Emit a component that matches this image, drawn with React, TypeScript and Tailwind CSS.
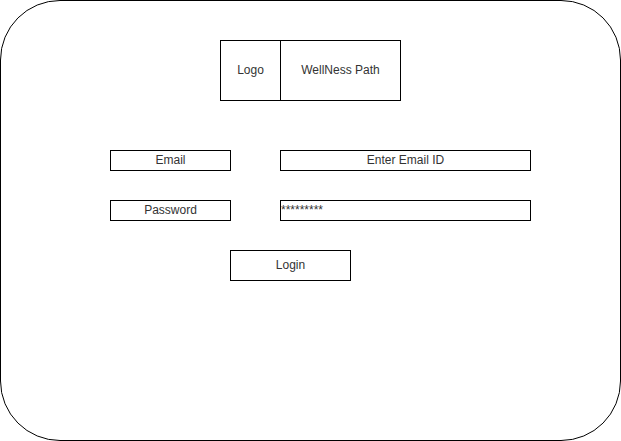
export default function App() {
  return (
    <div className="h-[441px] w-[621px] bg-white font-['Liberation_Sans',Arial,sans-serif] text-[12px] text-[#333]">
      <div className="flex h-[441px] w-[621px] flex-col rounded-[60px] border border-black">
        {/* Header */}
        <div className="ml-[219px] mt-[39px] flex">
          <div className="flex h-[61px] w-[61px] items-center justify-center border border-black pb-px">Logo</div>
          <div className="flex h-[61px] w-[120px] items-center justify-center border-y border-r border-black pb-px">
            WellNess Path
          </div>
        </div>

        {/* Email */}
        <div className="ml-[109px] mt-[49px] flex gap-[49px]">
          <div className="flex h-[21px] w-[121px] items-center justify-center border border-black pb-px">Email</div>
          <div className="flex h-[21px] w-[251px] items-center justify-center border border-black pb-px">
            Enter Email ID
          </div>
        </div>

        {/* Password */}
        <div className="ml-[109px] mt-[29px] flex gap-[49px]">
          <div className="flex h-[21px] w-[121px] items-center justify-center border border-black pb-px">Password</div>
          <div className="flex h-[21px] w-[251px] items-center border border-black leading-none">
            <span className="-mt-[2px]">*********</span>
          </div>
        </div>

        {/* Login */}
        <div className="ml-[229px] mt-[29px] flex">
          <div className="flex h-[31px] w-[121px] items-center justify-center border border-black pb-px">Login</div>
        </div>
      </div>
    </div>
  );
}
